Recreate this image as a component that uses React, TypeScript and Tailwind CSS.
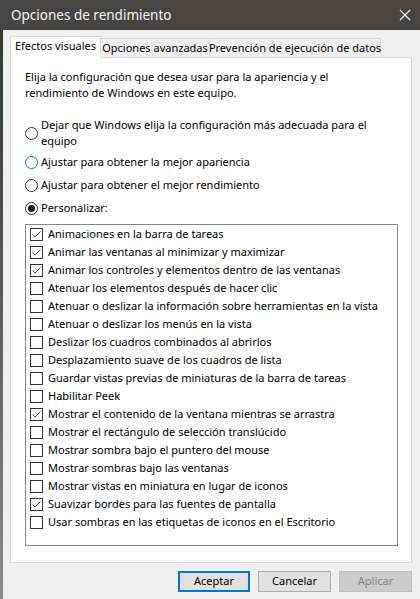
import { ReactNode } from "react";

const effects: [string, boolean][] = [
  ["Animaciones en la barra de tareas", true],
  ["Animar las ventanas al minimizar y maximizar", true],
  ["Animar los controles y elementos dentro de las ventanas", true],
  ["Atenuar los elementos después de hacer clic", false],
  ["Atenuar o deslizar la información sobre herramientas en la vista", false],
  ["Atenuar o deslizar los menús en la vista", false],
  ["Deslizar los cuadros combinados al abrirlos", false],
  ["Desplazamiento suave de los cuadros de lista", false],
  ["Guardar vistas previas de miniaturas de la barra de tareas", false],
  ["Habilitar Peek", false],
  ["Mostrar el contenido de la ventana mientras se arrastra", true],
  ["Mostrar el rectángulo de selección translúcido", false],
  ["Mostrar sombra bajo el puntero del mouse", false],
  ["Mostrar sombras bajo las ventanas", false],
  ["Mostrar vistas en miniatura en lugar de iconos", false],
  ["Suavizar bordes para las fuentes de pantalla", true],
  ["Usar sombras en las etiquetas de iconos en el Escritorio", false],
];

function Radio({
  checked,
  hover,
  children,
  className = "",
}: {
  checked?: boolean;
  hover?: boolean;
  children: ReactNode;
  className?: string;
}) {
  return (
    <div className={`flex items-center gap-[3px] ${className}`}>
      <span
        className={`w-[13px] h-[13px] shrink-0 rounded-full border bg-white flex items-center justify-center ${
          hover ? "border-[#0078d7]" : "border-[#333333]"
        }`}
      >
        {checked && <span className="w-[7px] h-[7px] rounded-full bg-[#1a1a1a]" />}
      </span>
      <span className="leading-[16px]">{children}</span>
    </div>
  );
}

function CheckBox({ checked }: { checked: boolean }) {
  return (
    <svg width="13" height="13" viewBox="0 0 13 13" className="shrink-0">
      <rect x="0.5" y="0.5" width="12" height="12" fill="#fff" stroke="#333" />
      {checked && (
        <path d="M2.5 6.5 L5 9 L10.5 3.5" fill="none" stroke="#444" strokeWidth="1" />
      )}
    </svg>
  );
}

export default function App() {
  return (
    <div className="w-[420px] h-[599px] flex flex-col overflow-hidden bg-[#f0f0f0] text-[11px] text-black font-['Noto_Sans','DejaVu_Sans',sans-serif]">
      {/* title bar */}
      <div className="h-[30px] shrink-0 bg-[#464543] flex items-center justify-between pl-[11px] pr-[9px] text-[#f4f4f4]">
        <span className="text-[13.5px]">Opciones de rendimiento</span>
        <svg width="12" height="12" viewBox="0 0 12 12">
          <path d="M1 1 L11 11 M11 1 L1 11" stroke="#f4f4f4" strokeWidth="1.2" />
        </svg>
      </div>

      <div className="flex flex-1">
        <div className="w-[3px] bg-gradient-to-b from-[#2d3a2e] via-[#5a605a] to-[#8a8c88]" />
        <div className="flex-1 flex flex-col pl-[7px] pr-[8px] pt-[6px]">
          {/* tabs */}
          <div className="flex items-end h-[21px] whitespace-nowrap">
            <div className="w-[91px] h-[22px] -mb-px relative z-10 bg-white border border-[#d9d9d9] border-b-0 flex items-center justify-center pb-[2px]">
              Efectos visuales
            </div>
            <div className="w-[109px] h-[19px] border border-l-0 border-b-0 border-[#d9d9d9] flex items-center justify-center">
              Opciones avanzadas
            </div>
            <div className="w-[171px] h-[19px] border border-l-0 border-b-0 border-[#d9d9d9] flex items-center justify-center">
              Prevención de ejecución de datos
            </div>
          </div>

          {/* panel */}
          <div className="h-[506px] bg-white border border-[#d9d9d9] pl-[14px] pr-[13px] pt-[11px]">
            <p className="leading-[16px]">
              Elija la configuración que desea usar para la apariencia y el
              <br />
              rendimiento de Windows en este equipo.
            </p>

            <Radio className="mt-[16px]">
              Dejar que Windows elija la configuración más adecuada para el
              <br />
              equipo
            </Radio>
            <Radio hover className="mt-[5px]">
              Ajustar para obtener la mejor apariencia
            </Radio>
            <Radio className="mt-[7px]">Ajustar para obtener el mejor rendimiento</Radio>
            <Radio checked className="mt-[7px]">
              Personalizar:
            </Radio>

            <div className="mt-[8px] h-[322px] border border-[#828790] bg-white">
              {effects.map(([label, on]) => (
                <div key={label} className="h-[18px] flex items-center pl-[4px] gap-[5px] whitespace-nowrap">
                  <CheckBox checked={on} />
                  <span>{label}</span>
                </div>
              ))}
            </div>
          </div>

          {/* buttons */}
          <div className="flex justify-end gap-[8px] mt-[8px]">
            <button className="w-[72px] h-[21px] bg-[#e1e1e1] border-2 border-[#0078d7]">Aceptar</button>
            <button className="w-[73px] h-[21px] bg-[#e1e1e1] border border-[#adadad]">Cancelar</button>
            <button className="w-[73px] h-[21px] bg-[#cccccc] border border-[#bfbfbf] text-[#838383]">Aplicar</button>
          </div>
        </div>
      </div>
    </div>
  );
}
